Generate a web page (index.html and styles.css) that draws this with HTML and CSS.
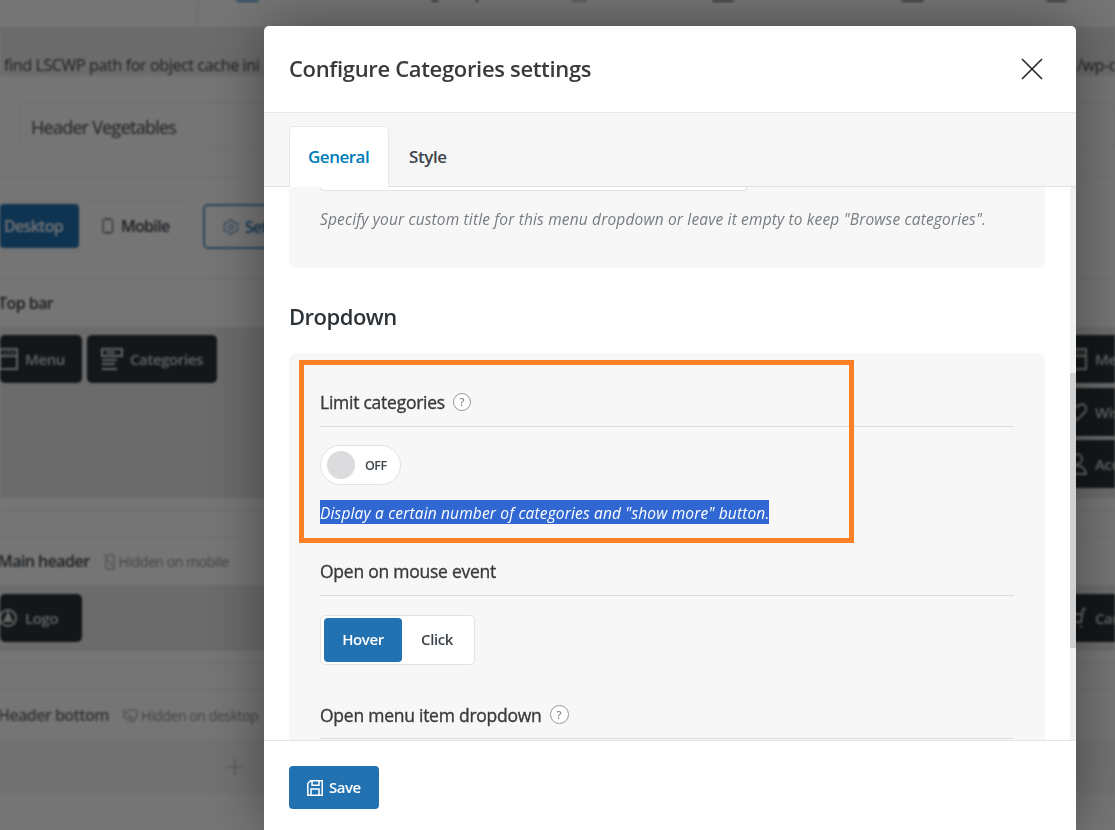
FILE: index.html
```html
<!DOCTYPE html>
<html lang="en">
<head>
  <meta charset="UTF-8">
  <meta name="viewport" content="width=device-width, initial-scale=1.0">
  <title>Header builder</title>
  <link rel="stylesheet" href="styles.css">
</head>
<body>
  <!-- Builder page -->
  <div class="page">
    <div class="top-nav">
      <div class="nav-side"></div>
      <div class="nav-items">
        <span class="nav-mark nav-blue"></span>
        <span class="nav-mark nav-dot"></span>
        <span class="nav-mark nav-dot2"></span>
        <span class="nav-mark nav-light"></span>
        <span class="nav-mark nav-a"></span>
        <span class="nav-mark nav-b"></span>
        <span class="nav-mark nav-c"></span>
      </div>
    </div>
    <div class="notice">
      <span class="notice-start">find LSCWP path for object cache ini</span>
      <span class="notice-end">/wp-content</span>
    </div>
    <div class="name-row">
      <div class="name-input">Header Vegetables</div>
    </div>
    <div class="toolbar">
      <div class="devices">
        <div class="device active">Desktop</div>
        <div class="device">
          <svg width="12" height="16" viewBox="0 0 12 16"><rect x="1" y="1" width="9.500" height="14" rx="1.500"/><path d="M4 1.500h3.500M4 14.500h3.500"/></svg>
          Mobile
        </div>
      </div>
      <div class="settings-btn">
        <svg width="16" height="16" viewBox="0 0 16 16"><path d="M6.500 1h3l.6 2 1.700 1 2-.5 1.400 2.600L13.800 7.500v1.200l1.400 1.400-1.400 2.500-2-.5-1.700 1-.6 1.900h-3l-.6-1.900-1.700-1-2 .5-1.400-2.500 1.400-1.400V7.500L.8 6.100l1.400-2.600 2 .5 1.700-1z"/><circle cx="8" cy="8" r="2.300"/></svg>
        Settings
      </div>
    </div>

    <div class="row-head">Top bar</div>
    <div class="row-body tall">
      <div class="elements">
        <div class="element menu">
          <svg width="20" height="22" viewBox="0 0 20 22"><path d="M0 1h17v20H0zM0 8h17M4 4.500h2M8 4.500h2M12 4.500h2"/></svg>
          Menu
        </div>
        <div class="element categories">
          <svg width="22" height="22" viewBox="0 0 22 22"><path d="M1 1h20v7H1zM5 4.500h9M1 12h15M1 16h13M1 21h15"/></svg>
          Categories
        </div>
      </div>
      <div class="elements-right">
        <div class="element">
          <svg width="20" height="22" viewBox="0 0 20 22"><path d="M1 1h17v20H1zM1 8h17M5 4.500h2M9 4.500h2M13 4.500h2"/></svg>
          Menu
        </div>
        <div class="element">
          <svg width="20" height="22" viewBox="0 0 20 22"><path d="M9 19L2 11C-2 5 5 0 9.500 6 14 0 21 5 17 11z"/></svg>
          Wishlist
        </div>
        <div class="element">
          <svg width="20" height="22" viewBox="0 0 20 22"><circle cx="9" cy="6" r="5"/><path d="M1 21c0-11 16-11 17 0z"/></svg>
          Account
        </div>
      </div>
    </div>
    <div class="row-gap"></div>

    <div class="row-head">
      Main header
      <span class="hidden-note">
        <svg width="13" height="16" viewBox="0 0 13 16"><path d="M3 1h8v11M3 4v11h8M1 1l11 14"/></svg>
        Hidden on mobile
      </span>
    </div>
    <div class="row-body">
      <div class="elements">
        <div class="element menu">
          <svg width="20" height="22" viewBox="0 0 20 22"><circle cx="8" cy="11" r="8"/><path class="solid" d="M8 6l3.500 8h-7z"/></svg>
          Logo
        </div>
      </div>
      <div class="elements-right">
        <div class="element">
          <svg width="20" height="22" viewBox="0 0 20 22"><path d="M18 2h-3l-2 13H4L2 7h12M5 19.500h1M12 19.500h2"/></svg>
          Cart
        </div>
      </div>
    </div>
    <div class="row-gap"></div>

    <div class="row-head faded">
      Header bottom
      <span class="hidden-note">
        <svg width="16" height="15" viewBox="0 0 16 15"><path d="M5 2h10v8h-3M2 3v7h8M5 13h8M1 1l12 12"/></svg>
        Hidden on desktop
      </span>
    </div>
    <div class="row-body empty">
      <svg class="plus" width="18" height="18" viewBox="0 0 18 18"><path d="M9 1v16M1 9h16"/></svg>
    </div>
    <div class="row-end"></div>
  </div>

  <!-- Settings popup -->
  <div class="overlay">
    <div class="popup">
      <div class="popup-header">
        <h2 class="popup-title">Configure Categories settings</h2>
        <svg class="close" width="22" height="22" viewBox="0 0 22 22"><path d="M1 1l20 20M21 1L1 21"/></svg>
      </div>
      <div class="tabs">
        <div class="tab active">General</div>
        <div class="tab">Style</div>
      </div>
      <div class="popup-body">
        <div class="content">
          <div class="panel panel-title">
            <div class="text-input"></div>
            <p class="description">Specify your custom title for this menu dropdown or leave it empty to keep "Browse categories".</p>
          </div>
          <h3 class="section-title">Dropdown</h3>
          <div class="panel panel-dropdown">
            <div class="field-label">Limit categories <span class="hint">?</span></div>
            <div class="switch"><span class="knob"></span>OFF</div>
            <p class="description selected"><span>Display a certain number of categories and "show more" button.</span></p>
            <div class="field-label label-event">Open on mouse event</div>
            <div class="buttons-set">
              <div class="set-item active">Hover</div>
              <div class="set-item">Click</div>
            </div>
            <div class="field-label label-item">Open menu item dropdown <span class="hint">?</span></div>
            <div class="marker"></div>
          </div>
        </div>
        <div class="scrollbar"><div class="thumb"></div></div>
      </div>
      <div class="popup-footer">
        <div class="save-btn">
          <svg width="16" height="16" viewBox="0 0 16 16"><path d="M3.500.8H15.200V15.200H.8V3.500zM5 .8v4.400h7V.8M4 15.200V9h8v6.200"/></svg>
          Save
        </div>
      </div>
    </div>
  </div>
</body>
</html>
```

FILE: styles.css
```css
* {
  box-sizing: border-box;
}

body {
  margin: 0;
  height: 830px;
  overflow: hidden;
  background-color: #fff;
  color: #3c434a;
  font-family: "Open Sans", "Noto Sans", sans-serif;
}

svg {
  flex: none;
  fill: none;
  stroke: currentColor;
}

/* Builder page */
.page {
  width: 1115px;
  height: 830px;
  overflow: hidden;
  filter: blur(1px);
  white-space: nowrap;
}

.top-nav {
  display: flex;
  height: 27px;
}

.nav-side {
  width: 198px;
  border-right: 1px solid #e6e6e6;
}

.nav-items {
  display: flex;
  padding-left: 38px;
}

.nav-mark {
  height: 2px;
  background-color: #777;
  border-radius: 0 0 3px 3px;
}

.nav-blue {
  width: 23px;
  background-color: #4898c2;
}

.nav-dot {
  width: 8px;
  margin-left: 172px;
}

.nav-dot2 {
  width: 4px;
  margin-left: 36px;
}

.nav-light {
  width: 16px;
  margin-left: 92px;
  background-color: #bbb;
}

.nav-a {
  width: 22px;
  margin-left: 125px;
}

.nav-b {
  width: 23px;
  margin-left: 167px;
}

.nav-c {
  width: 21px;
  margin-left: 122px;
}

.notice {
  display: flex;
  height: 49px;
  padding: 27px 0 0 4px;
  background-color: #eaeaea;
  font-size: 16px;
  line-height: 22px;
  letter-spacing: -0.35px;
}

.notice-start {
  flex: none;
  width: 1073px;
}

.name-row {
  height: 101px;
  padding: 26px 0 0 20px;
  border-bottom: 1px solid #eee;
}

.name-input {
  height: 48px;
  padding-left: 10px;
  border: 1px solid #ededed;
  border-radius: 5px;
  font-size: 18px;
  line-height: 48px;
  letter-spacing: -0.75px;
}

.toolbar {
  display: flex;
  gap: 13px;
  height: 102px;
  padding-top: 24px;
  border-bottom: 1px solid #eee;
  font-size: 16px;
  font-weight: 600;
  letter-spacing: -0.7px;
}

.devices {
  display: flex;
  width: 190px;
  height: 51px;
  padding: 2px 0 3px;
  border: 1px solid #efefef;
  border-left: 0;
  border-radius: 5px;
}

.device {
  display: flex;
  align-items: center;
  gap: 7px;
  padding-left: 23px;
}

.device.active {
  width: 79px;
  padding-left: 4px;
  border-radius: 4px;
  background-color: #2271b1;
  color: #fff;
}

.settings-btn {
  display: flex;
  align-items: center;
  gap: 6px;
  width: 120px;
  height: 45px;
  margin-top: 3px;
  padding-left: 18px;
  border: 2px solid #5d9bca;
  border-radius: 5px;
  color: #2271b1;
}

.row-head {
  display: flex;
  align-items: center;
  height: 48px;
  margin-left: -2px;
  font-size: 16px;
  font-weight: 600;
  letter-spacing: -0.55px;
}

.row-head.faded {
  height: 49px;
  color: #6b7075;
}

.row-body {
  display: flex;
  justify-content: space-between;
  height: 66px;
  padding-top: 9px;
  background-color: #e9e9e9;
}

.row-body.tall {
  height: 171px;
  padding-top: 8px;
}

.row-gap {
  height: 39px;
  border-bottom: 1px solid #eee;
  background: linear-gradient(#fff 12px, #e9e9e9 12px, #e9e9e9 13px, #fff 13px);
}

.elements {
  display: flex;
  gap: 5px;
}

.elements-right {
  display: flex;
  flex-direction: column;
  gap: 5px;
  width: 58px;
}

.element {
  display: flex;
  align-items: center;
  gap: 7px;
  flex: none;
  width: 130px;
  height: 48px;
  padding-left: 14px;
  border-radius: 5px;
  background-color: #2a3338;
  color: #d9d9d9;
  font-size: 15px;
  font-weight: 600;
  letter-spacing: -0.4px;
}

.tall .elements-right {
  gap: 4.5px;
}

.elements-right .element {
  padding-left: 11px;
}

.element svg {
  stroke-width: 2;
}

.element .solid {
  fill: currentColor;
}

.element.menu {
  width: 82px;
  padding-left: 0;
  gap: 5px;
}

.hidden-note {
  display: flex;
  align-items: center;
  gap: 3px;
  margin-left: 13px;
  padding-top: 1px;
  color: #8c9094;
  font-size: 14px;
  font-weight: 400;
  letter-spacing: -0.4px;
}

.row-body.empty {
  height: 55px;
  padding: 19px 0 0 226px;
  background-color: #f7f7f7;
}

.plus {
  color: #aaa;
}

.row-end {
  height: 14px;
  border-bottom: 1px solid #f5f5f5;
}

/* Popup */
.overlay {
  position: fixed;
  inset: 0;
  padding: 26px 39px 0 264px;
  background-color: rgba(0, 0, 0, 0.54);
}

.popup {
  display: flex;
  flex-direction: column;
  width: 812px;
  height: 804px;
  border-radius: 5px 5px 0 0;
  background-color: #fff;
  box-shadow: 0 0 60px rgba(0, 0, 0, 0.4);
  overflow: hidden;
}

.popup-header {
  display: flex;
  align-items: center;
  justify-content: space-between;
  height: 87px;
  padding: 0 33px 0 25px;
  border-bottom: 1px solid #e8e8e8;
}

.popup-title {
  margin: 0 0 2px;
  color: #3a3a3a;
  font-size: 22px;
  font-weight: 600;
  letter-spacing: -0.33px;
}

.close {
  color: #2a2a2a;
  stroke-width: 1.7;
}

.tabs {
  display: flex;
  height: 74px;
  padding: 13px 25px 0;
  border-bottom: 1px solid #e1e1e1;
  background-color: #f6f6f6;
}

.tab {
  height: 61px;
  padding: 0 20px;
  color: #3c434a;
  font-size: 17px;
  font-weight: 600;
  line-height: 61px;
  letter-spacing: -0.4px;
}

.tab.active {
  width: 100px;
  padding: 0 0 0 18px;
  border: 1px solid #e8e8e8;
  border-bottom: 0;
  border-radius: 5px 5px 0 0;
  background-color: #fff;
  color: #007cba;
  line-height: 60px;
  letter-spacing: -0.5px;
}

.popup-body {
  display: flex;
  justify-content: space-between;
  height: 553px;
  overflow: hidden;
}

.content {
  width: 756px;
  margin-left: 25px;
}

.panel {
  padding: 0 31px;
  border-radius: 0 0 8px 8px;
  background-color: #f7f7f7;
}

.panel-title {
  height: 81px;
}

.text-input {
  width: 427px;
  height: 4px;
  border: 1px solid #e3e3e3;
  border-top: 0;
  border-radius: 0 0 5px 5px;
  background-color: #fff;
}

.description {
  margin: 0;
  height: 24px;
  color: #777c82;
  font-size: 15.5px;
  font-style: italic;
  line-height: 24px;
  letter-spacing: 0.16px;
  white-space: nowrap;
}

.panel-title .description {
  margin-top: 16px;
}

.section-title {
  margin: 0;
  height: 85px;
  padding-top: 33px;
  color: #2c3338;
  font-size: 22px;
  font-weight: 600;
  line-height: 30px;
  letter-spacing: -0.5px;
}

.panel-dropdown {
  height: 400px;
  padding-top: 36px;
  border-radius: 8px 8px 0 0;
}

.field-label {
  display: flex;
  align-items: flex-start;
  gap: 8px;
  height: 38px;
  border-bottom: 1px solid #dcdcde;
  color: #3a3a3a;
  font-size: 17.5px;
  line-height: 27px;
  letter-spacing: -0.25px;
  -webkit-text-stroke: 0.35px #3a3a3a;
}

.hint {
  width: 18px;
  height: 18px;
  margin-top: 4px;
  border: 1px solid #999;
  border-radius: 50%;
  background-color: #fff;
  color: #888;
  font-size: 11px;
  font-weight: 600;
  line-height: 16px;
  letter-spacing: 0;
  text-align: center;
  -webkit-text-stroke: 0;
}

.switch {
  display: flex;
  align-items: center;
  gap: 10px;
  width: 81px;
  height: 40px;
  margin: 18px 0 15px;
  padding-left: 6px;
  border: 1px solid #e3e3e3;
  border-radius: 20px;
  background-color: #fff;
  font-size: 12.5px;
  font-weight: 600;
  letter-spacing: -0.5px;
}

.knob {
  width: 28px;
  height: 28px;
  border-radius: 50%;
  background-color: #dcdcde;
}

.selected span {
  display: inline-block;
  height: 24px;
  line-height: 27px;
  background-color: #3067d2;
  color: #fff;
}

.label-event {
  margin-top: 34px;
}

.buttons-set {
  display: flex;
  width: 155px;
  height: 50px;
  margin-top: 19px;
  padding: 2px 3px;
  border: 1px solid #e3e3e3;
  border-radius: 5px;
  background-color: #fff;
}

.set-item {
  flex: none;
  width: 70px;
  height: 44px;
  border-radius: 4px;
  font-size: 15px;
  font-weight: 600;
  line-height: 43px;
  letter-spacing: -0.4px;
  text-align: center;
}

.set-item.active {
  width: 78px;
  background-color: #2271b1;
  color: #fff;
}

.label-item {
  height: 37px;
  margin-top: 37px;
}

.label-item .hint {
  width: 19px;
  height: 19px;
  margin-top: 3px;
  line-height: 17px;
}

/* Frame round the limit option */
.marker {
  position: fixed;
  top: 360px;
  left: 299px;
  width: 555px;
  height: 183px;
  border: 5px solid #ff7f27;
}

.scrollbar {
  width: 6px;
  padding-top: 186px;
  background-color: #f1f1f1;
}

.thumb {
  height: 275px;
  background-color: #d1d1d1;
}

.popup-footer {
  height: 90px;
  padding: 25px;
  border-top: 1px solid #e5e5e5;
}

.save-btn {
  display: flex;
  align-items: center;
  gap: 6px;
  width: 90px;
  height: 43px;
  padding: 0 0 1px 18px;
  border-radius: 4px;
  background-color: #2271b1;
  color: #fff;
  font-size: 15px;
  font-weight: 600;
  letter-spacing: -0.5px;
}

.save-btn svg {
  margin-top: 1px;
  stroke-width: 1.5;
}
```
